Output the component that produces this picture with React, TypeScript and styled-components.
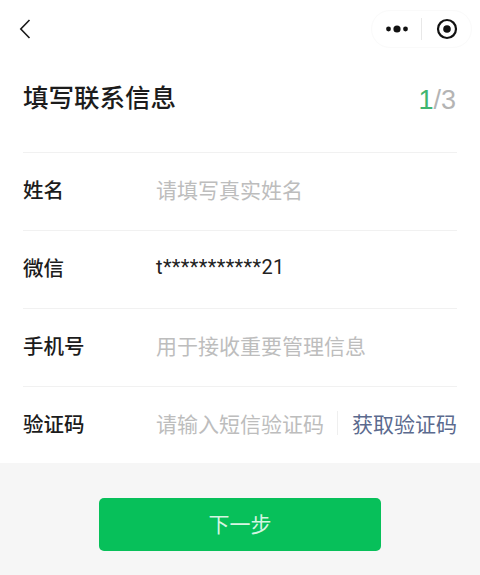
import styled, { createGlobalStyle } from "styled-components";

const GlobalStyle = createGlobalStyle`
  html, body {
    margin: 0;
    padding: 0;
    background: #fff;
  }

  * {
    box-sizing: border-box;
  }
`;

const Page = styled.div`
  width: 480px;
  height: 575px;
  display: flex;
  flex-direction: column;
  overflow: hidden;
  background: #fff;
  color: #1a1a1a;
  font-family: "Noto Sans CJK SC", "Liberation Sans", sans-serif;
`;

const NavBar = styled.header`
  height: 58px;
  flex: none;
  padding: 10px 8px 0 19px;
  display: flex;
  align-items: flex-start;
  justify-content: space-between;
`;

const BackButton = styled.button`
  width: 14px;
  height: 38px;
  padding: 0;
  border: 0;
  background: none;
  display: flex;
  align-items: center;
`;

const Capsule = styled.div`
  width: 101px;
  height: 38px;
  border-radius: 19px;
  border: 1px solid #fafafa;
  display: flex;
  align-items: center;
`;

const CapsuleSlot = styled.div`
  flex: 1;
  display: flex;
  align-items: center;
  justify-content: center;
`;

const CapsuleDivider = styled.div`
  width: 1px;
  height: 22px;
  background: #e8e8e8;
`;

const Heading = styled.div`
  height: 94px;
  flex: none;
  margin: 0 24px 0 23px;
  padding-bottom: 18px;
  display: flex;
  align-items: center;
  justify-content: space-between;
`;

const Title = styled.h1`
  margin: 0;
  font-size: 25.5px;
  font-weight: 500;
  line-height: 1.2;
  color: #1c1c1c;
`;

const Steps = styled.div`
  margin-top: 8px;
  font-family: "Liberation Sans", sans-serif;
  font-size: 27px;
  color: #b4b4b4;
`;

const CurrentStep = styled.span`
  color: #3fb56f;
`;

const Form = styled.section`
  flex: 1;
`;

const Row = styled.div`
  height: 78px;
  margin: 0 23px;
  padding-bottom: 6px;
  border-top: 1px solid #f1f1f1;
  display: flex;
  align-items: center;

  &:last-child {
    height: 77px;
    padding-bottom: 5px;
  }
`;

const Label = styled.div`
  width: 133px;
  flex: none;
  font-size: 20.5px;
  font-weight: 500;
  color: #1c1c1c;
`;

const Value = styled.div<{ $placeholder?: boolean }>`
  flex: 1;
  font-size: 21px;
  white-space: nowrap;
  color: ${(props) => (props.$placeholder ? "#bdbdbd" : "#222")};
`;

const MaskedValue = styled(Value)`
  font-family: Roboto, sans-serif;
  font-size: 20px;
  letter-spacing: 0.35px;
`;

const CodeDivider = styled.div`
  width: 1px;
  height: 24px;
  margin: 0 14px 0 13px;
  background: #efefef;
`;

const CodeLink = styled.button`
  padding: 0;
  border: 0;
  background: none;
  flex: none;
  font-family: inherit;
  font-size: 21px;
  white-space: nowrap;
  color: #5b6a8e;
`;

const Footer = styled.footer`
  height: 112px;
  flex: none;
  padding-top: 35px;
  background: #f6f6f6;
  display: flex;
  justify-content: center;
  align-items: flex-start;
`;

const NextButton = styled.button`
  width: 282px;
  height: 53px;
  padding: 0 0 3px;
  border: 0;
  border-radius: 5px;
  background: #07c05a;
  font-family: inherit;
  font-size: 21px;
  color: #d6f5e2;
`;

const BackIcon = () => (
  <svg width="14" height="24" viewBox="0 0 14 24" fill="none">
    <path d="M10.5 3 1.8 12l8.7 9" stroke="#1a1a1a" strokeWidth="1.6" />
  </svg>
);

const MoreIcon = () => (
  <svg width="24" height="10" viewBox="0 0 24 10" fill="#111">
    <circle cx="3.5" cy="5" r="2.4" />
    <circle cx="12" cy="5" r="3.6" />
    <circle cx="20.5" cy="5" r="2.4" />
  </svg>
);

const RecordIcon = () => (
  <svg width="22" height="22" viewBox="0 0 22 22" fill="none">
    <circle cx="11" cy="11" r="9" stroke="#111" strokeWidth="2.2" />
    <circle cx="11" cy="11" r="3.8" fill="#111" />
  </svg>
);

export default function App() {
  return (
    <Page>
      <GlobalStyle />
      <NavBar>
        <BackButton aria-label="返回">
          <BackIcon />
        </BackButton>
        <Capsule>
          <CapsuleSlot>
            <MoreIcon />
          </CapsuleSlot>
          <CapsuleDivider />
          <CapsuleSlot>
            <RecordIcon />
          </CapsuleSlot>
        </Capsule>
      </NavBar>
      <Heading>
        <Title>填写联系信息</Title>
        <Steps>
          <CurrentStep>1</CurrentStep>/3
        </Steps>
      </Heading>
      <Form>
        <Row>
          <Label>姓名</Label>
          <Value $placeholder>请填写真实姓名</Value>
        </Row>
        <Row>
          <Label>微信</Label>
          <MaskedValue>t***********21</MaskedValue>
        </Row>
        <Row>
          <Label>手机号</Label>
          <Value $placeholder>用于接收重要管理信息</Value>
        </Row>
        <Row>
          <Label>验证码</Label>
          <Value $placeholder>请输入短信验证码</Value>
          <CodeDivider />
          <CodeLink>获取验证码</CodeLink>
        </Row>
      </Form>
      <Footer>
        <NextButton>下一步</NextButton>
      </Footer>
    </Page>
  );
}
